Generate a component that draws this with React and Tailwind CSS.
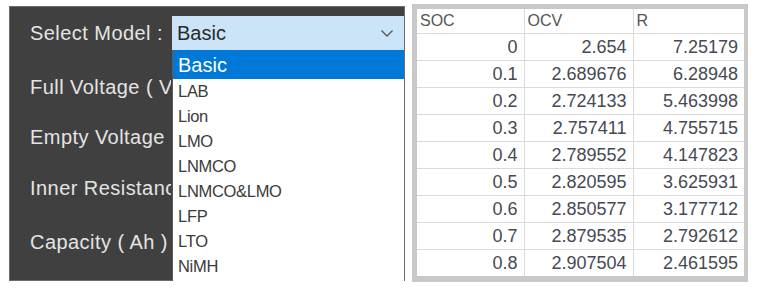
const MODELS = ['LAB', 'Lion', 'LMO', 'LNMCO', 'LNMCO&LMO', 'LFP', 'LTO', 'NiMH']

const ROWS = [
  ['0', '2.654', '7.25179'],
  ['0.1', '2.689676', '6.28948'],
  ['0.2', '2.724133', '5.463998'],
  ['0.3', '2.757411', '4.755715'],
  ['0.4', '2.789552', '4.147823'],
  ['0.5', '2.820595', '3.625931'],
  ['0.6', '2.850577', '3.177712'],
  ['0.7', '2.879535', '2.792612'],
  ['0.8', '2.907504', '2.461595'],
]

const LABELS = [
  ['Full Voltage ( V )', 'mt-[20px]'],
  ['Empty Voltage ( V )', 'mt-[16px]'],
  ['Inner Resistance', 'mt-[17px]'],
  ['Capacity ( Ah )', 'mt-[20px]'],
]

export default function App() {
  return (
    <div className="w-[765px] h-[288px] bg-white flex items-start font-['Liberation_Sans',Arial,sans-serif]">
      {/* model settings panel */}
      <div className="relative ml-[9px] mt-[6px] w-[396px] h-[275px] bg-[#404040] border border-[#6c6c6c] flex flex-col text-[#e4e4e4] text-[20px] tracking-[0.45px]">
        <div className="flex items-center mt-[9px] h-[34px]">
          <span className="pl-[20px] w-[162px] shrink-0">Select Model :</span>
          <div className="flex-1 h-full bg-[#cce4f7] flex items-center justify-between pl-[5px] pr-[10px] text-[#2a2a2a] tracking-normal">
            <span>Basic</span>
            <svg width="14" height="9" viewBox="0 0 14 9" fill="none">
              <path d="M1.5 1.5 7 7l5.5-5.5" stroke="#555" strokeWidth="1.3" />
            </svg>
          </div>
        </div>
        {LABELS.map(([t, m]) => (
          <div key={t} className={`${m} h-[34px] w-[161px] overflow-hidden flex items-center`}>
            <span className="pl-[20px] whitespace-nowrap">{t}</span>
          </div>
        ))}

        {/* open dropdown list */}
        <div className="absolute left-[162px] top-[43px] w-[232px] h-[231px] bg-white border-l border-[#5a5a5a] flex flex-col tracking-normal">
          <div className="h-[29px] shrink-0 bg-[#0078d7] text-white text-[20px] pl-[5px] flex items-center">Basic</div>
          {MODELS.map(m => (
            <div key={m} className="h-[25px] shrink-0 pl-[5px] flex items-center text-[16.5px] text-[#3a3a3a] tracking-[-0.3px]">
              {m}
            </div>
          ))}
        </div>
      </div>

      {/* SOC / OCV / R table */}
      <div className="ml-[7px] mt-[4px] w-[336px] h-[278px] overflow-hidden bg-white border-t-[5px] border-l-[5px] border-r-[4px] border-b-[6px] border-[#c8c8c8]">
        <table className="w-full border-collapse table-fixed leading-none text-[#454a54]">
          <colgroup>
            <col className="w-[107px]" />
            <col className="w-[109px]" />
            <col />
          </colgroup>
          <thead>
            <tr className="h-[24px] text-[16px] text-[#555]">
              <th className="p-0 font-normal text-left pl-[3px] border-r border-b border-[#dadada]">SOC</th>
              <th className="p-0 font-normal text-left pl-[3px] border-r border-b border-[#dadada]">OCV</th>
              <th className="p-0 font-normal text-left pl-[3px] border-b border-[#dadada]">R</th>
            </tr>
          </thead>
          <tbody>
            {ROWS.map((r, i) => (
              <tr key={i} className="h-[27px] text-[18px]">
                <td className="p-0 text-right pr-[6px] border-r border-b border-[#dadada]">{r[0]}</td>
                <td className="p-0 text-right pr-[6px] border-r border-b border-[#dadada]">{r[1]}</td>
                <td className="p-0 text-right pr-[6px] border-b border-[#dadada]">{r[2]}</td>
              </tr>
            ))}
          </tbody>
        </table>
      </div>
    </div>
  )
}
